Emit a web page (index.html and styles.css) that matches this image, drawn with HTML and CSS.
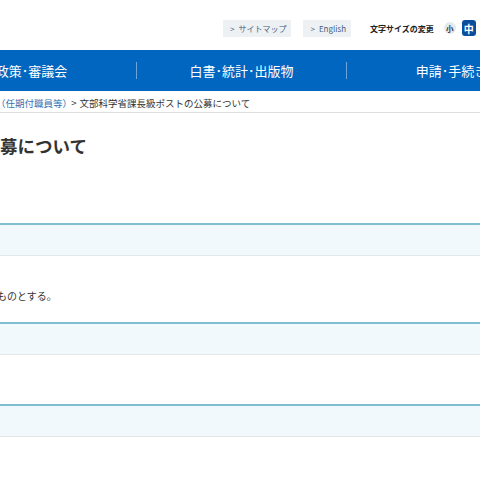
FILE: index.html
```html
<!DOCTYPE html>
<html lang="ja">
<head>
    <meta charset="UTF-8">
    <meta name="viewport" content="width=device-width, initial-scale=1.0">
    <title>文部科学省課長級ポストの公募について</title>
    <link rel="stylesheet" href="styles.css">
</head>
<body>

    <!-- Utility links and font size switcher -->
    <div class="util-bar">
        <a class="util-link" href="#">サイトマップ</a>
        <a class="util-link" href="#">English</a>
        <div class="font-size">
            <span class="font-size-label">文字サイズの変更</span>
            <span class="size-btn size-small">小</span>
            <span class="size-btn size-medium">中</span>
        </div>
    </div>

    <!-- Global navigation -->
    <nav class="global-nav">
        <ul>
            <li>政策･審議会</li>
            <li>白書･統計･出版物</li>
            <li>申請･手続き</li>
        </ul>
    </nav>

    <!-- Breadcrumb -->
    <div class="breadcrumb">
        <a href="#">（任期付職員等）</a>
        <span class="sep">&gt;</span>
        <span>文部科学省課長級ポストの公募について</span>
    </div>

    <main class="content">
        <h1 class="page-title">募について</h1>

        <h2 class="section-head"></h2>
        <p class="body-text">ものとする。</p>

        <h2 class="section-head"></h2>
        <div class="spacer"></div>

        <h2 class="section-head"></h2>
    </main>

</body>
</html>
```

FILE: styles.css
```css
/* Base */
body {
    margin: 0;
    font-family: "Noto Sans CJK JP", "Noto Sans", sans-serif;
    color: #333;
    background-color: #fff;
    overflow: hidden;
}

a {
    text-decoration: none;
}

/* Utility bar */
.util-bar {
    display: flex;
    align-items: center;
    height: 44px;
    padding: 6px 0 0 223px;
    white-space: nowrap;
}

.util-link {
    display: flex;
    align-items: center;
    height: 17px;
    padding: 0 5px 0 7px;
    margin-right: 12px;
    background-color: #eef1f4;
    color: #3f5f7e;
    font-size: 8px;
}

.util-link::before {
    content: ">";
    margin-right: 4px;
}

.font-size {
    display: flex;
    align-items: center;
    margin-left: 7px;
}

.font-size-label {
    font-size: 8px;
    font-weight: bold;
    color: #222;
    margin-right: 10px;
}

.size-btn {
    display: flex;
    align-items: center;
    justify-content: center;
    font-weight: bold;
}

.size-small {
    width: 12px;
    height: 12px;
    margin-right: 6px;
    border-radius: 50%;
    background-color: #e3eaee;
    color: #334;
    font-size: 7.5px;
}

.size-medium {
    width: 14px;
    height: 16px;
    border-radius: 3px;
    background-color: #0a4f9e;
    color: #fff;
    font-size: 10px;
}

/* Global navigation */
.global-nav {
    background-color: #0066c0;
    height: 41px;
}

.global-nav ul {
    display: flex;
    align-items: center;
    height: 100%;
    margin: 0 0 0 -73px;
    padding: 0;
    list-style: none;
}

.global-nav li {
    flex: 0 0 209px;
    text-align: center;
    line-height: 17px;
    font-size: 13px;
    color: #fff;
    white-space: nowrap;
}

.global-nav li + li {
    border-left: 1px solid #6ba5dc;
}

/* Breadcrumb */
.breadcrumb {
    padding: 6px 0 3px;
    line-height: 12px;
    font-size: 9.5px;
    border-bottom: 1px solid #dedede;
    white-space: nowrap;
}

.breadcrumb a {
    color: #3570b2;
    margin-left: -4px;
}

.breadcrumb .sep {
    margin: 0 1px 0 -3px;
}

/* Main content */
.page-title {
    margin: 21px 0 0;
    font-size: 17.5px;
    line-height: 24px;
}

.section-head {
    height: 30px;
    margin: 65px 0 0;
    background-color: #f1f9fc;
    border-top: 2px solid #7fbdd0;
    border-bottom: 1px solid #e2e8ea;
}

.body-text {
    margin: 32px 0 18px -3px;
    font-size: 10px;
    line-height: 16px;
}

.body-text + .section-head {
    margin-top: 0;
}

.spacer {
    height: 49px;
}

.spacer + .section-head {
    margin-top: 0;
}
```
